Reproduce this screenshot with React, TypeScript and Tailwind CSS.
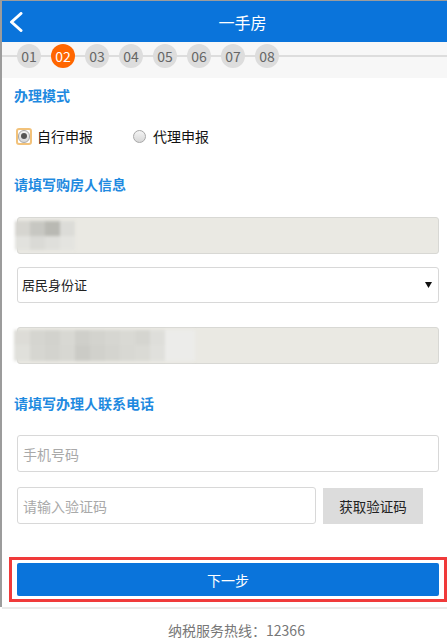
import React from "react";

const steps = ["01", "02", "03", "04", "05", "06", "07", "08"];

function Radio({ checked }: { checked?: boolean }) {
  return (
    <span className="flex h-[13px] w-[13px] items-center justify-center rounded-full border border-[#a8a8a8] bg-gradient-to-b from-[#f4f4f4] to-[#d8d8d8]">
      {checked && <span className="h-[6px] w-[6px] rounded-full bg-[#555]" />}
    </span>
  );
}

export default function App() {
  return (
    <div className="w-[447px] h-[644px] bg-white font-['Noto_Sans_CJK_SC','Liberation_Sans',sans-serif] overflow-hidden">
      <div className="h-[607px] border-l-2 border-t border-[#9c9c9c] flex flex-col">
        {/* header */}
        <div className="h-[41px] bg-[#0a74db] flex items-center shrink-0">
          <div className="w-[36px] flex items-center pl-[6px]">
            <svg width="16" height="20" viewBox="0 0 16 20">
              <path d="M13 1.5 L3.5 10 L13 18.5" fill="none" stroke="#fff" strokeWidth="3" strokeLinecap="round" strokeLinejoin="round" />
            </svg>
          </div>
          <div className="flex-1 text-center text-white text-[16px] leading-[20px]">一手房</div>
        </div>
        {/* steps */}
        <div className="relative h-[36px] bg-[#f7f7f7] shrink-0">
          <div className="absolute left-0 right-0 top-[13px] h-[2px] bg-[#dddddd]" />
          <div className="relative flex gap-[10px] pl-[15px] pt-[2px]">
            {steps.map((s) => (
              <div
                key={s}
                className={
                  s === "02"
                    ? "w-[24px] h-[24px] rounded-full bg-[#ff6600] text-white text-[14px] leading-[24px] text-center"
                    : "w-[24px] h-[24px] rounded-full bg-[#dddddd] text-[#666] text-[14px] leading-[24px] text-center"
                }
              >
                {s}
              </div>
            ))}
          </div>
        </div>
        {/* content */}
        <div className="flex flex-col">
          <div className="mt-[7px] pl-[12px] h-[20px] leading-[20px] text-[14px] font-bold text-[#1f8ae0]">办理模式</div>
          <div className="mt-[21px] h-[20px] flex items-center text-[14px] text-[#111]">
            <span className="ml-[14px] flex h-[17px] w-[16px] items-center justify-center rounded-[3px] border-2 border-[#f2c27a]">
              <Radio checked />
            </span>
            <span className="ml-[5px] leading-[20px]">自行申报</span>
            <span className="ml-[40px]">
              <Radio />
            </span>
            <span className="ml-[7px] leading-[20px]">代理申报</span>
          </div>
          <div className="mt-[28px] pl-[12px] h-[20px] leading-[20px] text-[14px] font-bold text-[#1f8ae0]">请填写购房人信息</div>
          <div className="mt-[23px] ml-[15px] mr-[8px] flex flex-col">
            <div className="relative h-[37px] rounded-[3px] border border-[#d8d8d4] bg-[#eae9e3]">
              <div className="absolute left-[-3px] top-[3px] flex blur-[1.5px]">
                <div className="flex flex-col">
                  <div className="flex">
                    <div className="w-[15px] h-[15px] bg-[#d6d5d0]" />
                    <div className="w-[15px] h-[15px] bg-[#c7c7c2]" />
                    <div className="w-[15px] h-[15px] bg-[#b9b9b3]" />
                    <div className="w-[15px] h-[15px] bg-[#dcdcd8]" />
                  </div>
                  <div className="flex">
                    <div className="w-[15px] h-[14px] bg-[#e2e2de]" />
                    <div className="w-[15px] h-[14px] bg-[#dadad6]" />
                    <div className="w-[15px] h-[14px] bg-[#dfdfdb]" />
                    <div className="w-[15px] h-[14px] bg-[#e4e4e0]" />
                  </div>
                </div>
              </div>
            </div>
            <div className="mt-[13px] h-[36px] rounded-[3px] border border-[#d8d8d8] bg-white flex items-center justify-between pl-[4px] pr-[6px]">
              <span className="text-[13px] leading-[20px] text-[#222]">居民身份证</span>
              <svg width="7" height="6" viewBox="0 0 7 6">
                <path d="M0 0 H7 L3.5 6 Z" fill="#111" />
              </svg>
            </div>
            <div className="relative mt-[24px] h-[37px] rounded-[3px] border border-[#d8d8d4] bg-[#eae9e3]">
              <div className="absolute left-[-4px] top-[2px] flex blur-[1.5px]">
                <div className="flex flex-col">
                  <div className="flex">
                    <div className="w-[16px] h-[15px] bg-[#dddcd7]" />
                    <div className="w-[15px] h-[15px] bg-[#d5d5d0]" />
                    <div className="w-[15px] h-[15px] bg-[#d2d2cd]" />
                    <div className="w-[15px] h-[15px] bg-[#d8d8d3]" />
                    <div className="w-[15px] h-[15px] bg-[#cfcfca]" />
                    <div className="w-[15px] h-[15px] bg-[#d3d3ce]" />
                    <div className="w-[15px] h-[15px] bg-[#d6d6d1]" />
                    <div className="w-[15px] h-[15px] bg-[#d9d9d4]" />
                    <div className="w-[15px] h-[15px] bg-[#d5d5d0]" />
                    <div className="w-[15px] h-[15px] bg-[#dededa]" />
                  </div>
                  <div className="flex">
                    <div className="w-[16px] h-[16px] bg-[#e0e0db]" />
                    <div className="w-[15px] h-[16px] bg-[#d6d6d1]" />
                    <div className="w-[15px] h-[16px] bg-[#d3d3ce]" />
                    <div className="w-[15px] h-[16px] bg-[#d7d7d2]" />
                    <div className="w-[15px] h-[16px] bg-[#cbcbc6]" />
                    <div className="w-[15px] h-[16px] bg-[#d1d1cc]" />
                    <div className="w-[15px] h-[16px] bg-[#d4d4cf]" />
                    <div className="w-[15px] h-[16px] bg-[#d8d8d3]" />
                    <div className="w-[15px] h-[16px] bg-[#dadad5]" />
                    <div className="w-[15px] h-[16px] bg-[#e0e0dc]" />
                  </div>
                </div>
                <div className="w-[30px] h-[31px] bg-[#ececea]" />
              </div>
            </div>
          </div>
          <div className="mt-[29px] pl-[12px] h-[20px] leading-[20px] text-[14px] font-bold text-[#1f8ae0]">请填写办理人联系电话</div>
          <div className="mt-[22px] ml-[15px] mr-[8px] flex flex-col">
            <div className="h-[37px] rounded-[3px] border border-[#d8d8d8] bg-white flex items-center pl-[5px]">
              <span className="text-[14px] leading-[20px] text-[#a9a9a9]">手机号码</span>
            </div>
            <div className="mt-[15px] flex items-start">
              <div className="w-[299px] h-[37px] rounded-[3px] border border-[#d8d8d8] bg-white flex items-center pl-[5px]">
                <span className="text-[14px] leading-[20px] text-[#a9a9a9]">请输入验证码</span>
              </div>
              <div className="ml-[7px] mt-[1px] w-[100px] h-[36px] bg-[#dcdcdc] flex items-center justify-center text-[13.5px] leading-[20px] text-[#222]">
                获取验证码
              </div>
            </div>
          </div>
          <div className="mt-[33px] ml-[7px] h-[45px] border-[3px] border-[#f03a3a] px-[5px] pt-[3px]">
            <div className="h-[33px] rounded-[2px] bg-[#0a74db] flex items-center justify-center text-white text-[14px] leading-[20px]">
              下一步
            </div>
          </div>
        </div>
      </div>
      <div className="ml-[2px] h-[2px] bg-[#ebebeb]" />
      <div className="pt-[11px] pl-[26px] text-center text-[14px] leading-[20px] text-[#777]">纳税服务热线：12366</div>
    </div>
  );
}
